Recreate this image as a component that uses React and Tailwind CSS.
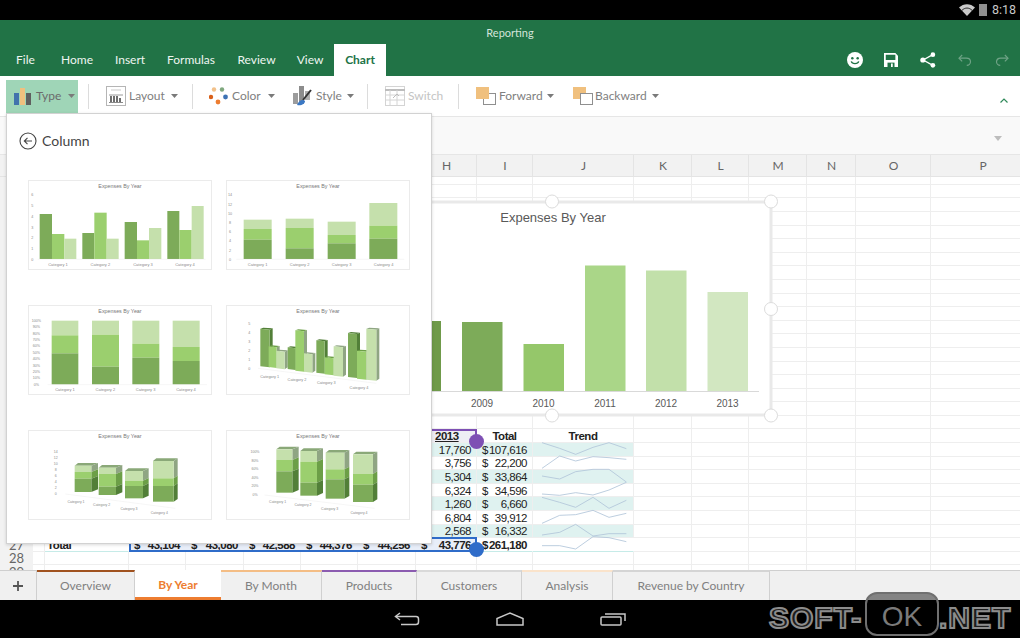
import React from "react";

const C = { d: "#7dab59", m: "#9bcf6e", l: "#c5e0ac" };
const CD = { d: "#527f38", m: "#6c9f47", l: "#8fa583" };

const colWidths = [33, 12, 84, 57, 58, 57, 57, 58, 61, 56, 101, 58, 57, 58, 49, 75, 104];
const colLetters = ["", "A", "B", "C", "D", "E", "F", "G", "H", "I", "J", "K", "L", "M", "N", "O", "P"];

const Dollar = ({ v, bold }) => (
  <div className={`flex justify-between w-full pl-[5px] pr-[5px] ${bold ? "font-bold" : ""}`}>
    <span>$</span>
    <span>{v}</span>
  </div>
);

const dataRows = {
  20: ["17,760", "107,616"],
  21: ["3,756", "22,200"],
  22: ["5,304", "33,864"],
  23: ["6,324", "34,596"],
  24: ["1,260", "6,660"],
  25: ["6,804", "39,912"],
  26: ["2,568", "16,332"],
};

function cellContent(r, c) {
  if (r === 19) {
    if (c === 8) return <div className="w-full pl-[19px] font-bold underline">2013</div>;
    if (c === 9) return <div className="w-full text-center font-bold">Total</div>;
    if (c === 10) return <div className="w-full text-center font-bold">Trend</div>;
  }
  if (dataRows[r]) {
    if (c === 8) return <div className="w-full text-right pr-[5px]">{dataRows[r][0]}</div>;
    if (c === 9) return <Dollar v={dataRows[r][1]} />;
  }
  if (r === 27) {
    if (c === 2) return <div className="pl-[2px] font-bold">Total</div>;
    if (c >= 3 && c <= 8)
      return <Dollar bold v={["43,104", "43,080", "42,588", "44,376", "44,256", "43,776"][c - 3]} />;
    if (c === 9) return <Dollar bold v="261,180" />;
  }
  return null;
}

function cellBg(r, c) {
  if ((r === 20 || r === 22 || r === 24 || r === 26) && (c === 8 || c === 9 || c === 10)) return "bg-[#dff2f0]";
  if (r === 19 && c === 8) return "bg-[#eeeef4]";
  if (r === 27 && c >= 3 && c <= 8) return "bg-[#e8eef9]";
  return "bg-white";
}

function Sheet() {
  const rows = Array.from({ length: 30 }, (_, i) => i);
  return (
    <div className="relative h-[415px] overflow-hidden bg-white">
      <div className="grid w-[1035px] grid-cols-[33px_12px_84px_57px_58px_57px_57px_58px_61px_56px_101px_58px_57px_58px_49px_75px_104px] grid-rows-[22px_7.8px_repeat(29,13.6px)] font-['Liberation_Sans'] text-[11.5px] tracking-[-0.5px] text-[#222]">
        {colWidths.map((_, c) => (
          <div key={c} className="flex items-center justify-center pl-[1px] bg-[#f2f2f2] border-r border-b border-[#e4e4e4] font-['Lato'] tracking-normal text-[12px] text-[#666]">
            {colLetters[c]}
          </div>
        ))}
        {rows.map((r) =>
          colWidths.map((_, c) =>
            c === 0 ? (
              <div key={`${r}-${c}`} className="flex items-center justify-center bg-[#f2f2f2] font-['Lato'] tracking-normal text-[13px] leading-[13px] text-[#666]">
                {r >= 27 ? r : ""}
              </div>
            ) : (
              <div
                key={`${r}-${c}`}
                className={`flex items-center pt-[1px] leading-[12px] whitespace-nowrap border-r border-b ${cellBg(r, c)} ${
                  r === 27 && c <= 10 && c >= 2 ? "border-b-[#c6ebe8] border-r-transparent" : "border-[#eeeeee]"
                }`}
              >
                {cellContent(r, c)}
              </div>
            )
          )
        )}
      </div>

      {/* sparkline overlay */}
      <svg className="absolute left-[533px] top-[285px]" width="102" height="113" viewBox="325 60 306 339" fill="none" stroke="#b3c6da" strokeWidth="2.6">
        <polyline points="352,68 405,85 453,103 505,82 553,68 605,86" />
        <polyline points="352,145 405,108 453,123 505,110 553,113 605,118" />
        <polyline points="352,168 405,177 453,155 505,148 553,148 605,186" />
        <polyline points="352,222 405,226 453,218 505,225 553,210 605,187" />
        <polyline points="352,232 405,247 453,262 505,232 553,265 605,241" />
        <polyline points="352,310 405,286 453,284 505,271 553,292 605,280" />
        <polyline points="352,345 405,337 453,313 505,348 553,341 605,341" />
        <polyline points="352,377 405,377 453,387 505,350 553,353 605,365" />
      </svg>

      {/* selection outlines */}
      <div className="absolute left-[416px] top-[274px] w-[61px] h-[15px] border-t-2 border-r-2 border-[#7e50b4]" />
      <div className="absolute left-[129px] top-[382px] w-[348px] h-[15px] border-2 border-[#2f6cc9]" />
      <div className="absolute left-[469px] top-[279px] w-[15px] h-[15px] rounded-full bg-[#7e50b4]" />
      <div className="absolute left-[469px] top-[387px] w-[15px] h-[15px] rounded-full bg-[#2f6cc9]" />

      <MainChart />
    </div>
  );
}

function MainChart() {
  const bars = [
    { x: 425, w: 16, t: 321, f: "#6f9a4a" },
    { x: 462, w: 40.5, t: 322, f: "#7dab59", y: "2009" },
    { x: 523.5, w: 40.5, t: 344, f: "#95c76a", y: "2010" },
    { x: 585, w: 40.5, t: 265.5, f: "#aad688", y: "2011" },
    { x: 646, w: 40.5, t: 270.5, f: "#c2e0aa", y: "2012" },
    { x: 707.5, w: 40.5, t: 292, f: "#d2e7c1", y: "2013" },
  ];
  return (
    <div className="absolute left-[420px] top-[45px] w-[360px] h-[218px]">
      <svg width="360" height="224" viewBox="420 200 360 224" className="overflow-visible">
        <rect x="421" y="202" width="350" height="213" fill="#fff" stroke="#e9e9e9" strokeWidth="3" />
        <text x="553" y="222" textAnchor="middle" fontFamily="Liberation Sans" fontSize="13" fill="#595959">Expenses By Year</text>
        {bars.map((b) => (
          <rect key={b.x} x={b.x} y={b.t} width={b.w} height={391.3 - b.t} fill={b.f} />
        ))}
        <line x1="425" x2="759" y1="391.5" y2="391.5" stroke="#d9d9d9" />
        {bars.filter((b) => b.y).map((b) => (
          <text key={b.y} x={b.x + 20} y="407" textAnchor="middle" fontFamily="Liberation Sans" fontSize="10" fill="#595959">{b.y}</text>
        ))}
        {[[552, 201.5], [771, 201.5], [771, 309], [552, 415.5], [771, 415.5]].map(([x, y]) => (
          <circle key={`${x}${y}`} cx={x} cy={y} r="6.5" fill="#fff" stroke="#dcdcdc" />
        ))}
      </svg>
    </div>
  );
}

const T = ({ x, y, a = "middle", s = 12, children }) => (
  <text x={x} y={y} textAnchor={a} fontSize={s} fill="#8a8a8a" fontFamily="Liberation Sans">{children}</text>
);

function Thumb({ ox, oy, children, title = ox + 276 }) {
  return (
    <div className="h-[90px] ring-1 ring-inset ring-[#ebebeb] bg-white">
      <svg className="block w-full h-full" viewBox={`${ox} ${oy} 552 270`}>
        <text x={title} y={oy + 25} textAnchor="middle" fontSize="16" fill="#777" fontFamily="Liberation Sans">Expenses By Year</text>
        {children}
      </svg>
    </div>
  );
}

const R = ({ x1, x2, t, b, f }) => <rect x={x1} y={t} width={x2 - x1} height={b - t} fill={f} />;

function Thumb1() {
  const bars = [[88,125,130,"d"],[125,162,190,"m"],[162,198,204,"l"],[216,252,187,"d"],[252,289,126,"m"],[289,325,204,"l"],[343,380,154,"d"],[380,416,209,"m"],[416,453,172,"l"],[471,507,121,"d"],[507,544,178,"m"],[544,580,106,"l"]];
  return (
    <Thumb ox={53} oy={28}>
      {bars.map(([a, b, t, k]) => <R key={a} x1={a} x2={b} t={t} b={265} f={C[k]} />)}
      <line x1="82" x2="586" y1="266" y2="266" stroke="#e5e5e5" />
      {[6,5,4,3,2,1,0].map((v, i) => <T key={v} x={66} y={77 + i * 32.2} s={11}>{v}</T>)}
      {[143,270,398,524].map((x, i) => <T key={x} x={x} y={285}>{`Category ${i + 1}`}</T>)}
    </Thumb>
  );
}

function Stack({ bars, base }) {
  return bars.map(([a, b, d, m, l]) => (
    <g key={a}>
      <R x1={a} x2={b} t={l} b={m} f={C.l} />
      <R x1={a} x2={b} t={m} b={d} f={C.m} />
      <R x1={a} x2={b} t={d} b={base} f={C.d} />
    </g>
  ));
}

function Thumb2() {
  return (
    <Thumb ox={649} oy={28}>
      <Stack base={265} bars={[[702,786,207,175,147],[828,912,233,172,144],[954,1038,218,193,153],[1079,1163,204,165,97]]} />
      <line x1="680" x2="1184" y1="266" y2="266" stroke="#e5e5e5" />
      {[14,12,10,8,6,4,2,0].map((v, i) => <T key={v} x={661} y={77 + i * 27.6} s={11}>{v}</T>)}
      {[744,870,996,1122].map((x, i) => <T key={x} x={x} y={285}>{`Category ${i + 1}`}</T>)}
    </Thumb>
  );
}

function Thumb3() {
  return (
    <Thumb ox={53} oy={403}>
      <Stack base={641} bars={[[124,204,548,494,450],[245,326,588,492,450],[366,447,561,519,450],[487,568,571,529,450]]} />
      <line x1="112" x2="590" y1="642" y2="642" stroke="#e5e5e5" />
      {[100,90,80,70,60,50,40,30,20,10,0].map((v, i) => <T key={v} x={78} y={454 + i * 19.1} s={11}>{`${v}%`}</T>)}
      {[164,285,406,527].map((x, i) => <T key={x} x={x} y={660}>{`Category ${i + 1}`}</T>)}
    </Thumb>
  );
}

function Bar3D({ a, b, t, bt, k, dx = 9, dy = 6 }) {
  return (
    <g>
      <polygon points={`${b},${t + 3} ${b + dx},${t - 1} ${b + dx},${bt - dy} ${b},${bt}`} fill={k === "d" ? CD.d : CD.l} />
      <polygon points={`${a},${t} ${a + dx},${t - 3} ${b + dx},${t - 1} ${b},${t + 3}`} fill={CD[k]} />
      <polygon points={`${a},${t} ${b},${t + 3} ${b},${bt} ${a},${bt - 3}`} fill={C[k]} />
    </g>
  );
}

function Thumb4() {
  const bars = [[752,780,474,590,"d"],[777,801,527,592,"m"],[800,825,540,596,"l"],[834,857,530,598,"d"],[857,883,479,603,"m"],[883,908,548,606,"l"],[920,945,509,609,"d"],[945,972,560,614,"m"],[972,1000,527,618,"l"],[1015,1042,487,622,"d"],[1042,1070,540,627,"m"],[1070,1100,474,630,"l"]];
  return (
    <Thumb ox={649} oy={403}>
      <line x1="745" x2="1100" y1="593" y2="638" stroke="#e5e5e5" />
      {bars.map(([a, b, t, bt, k]) => <Bar3D key={a} a={a} b={b} t={t} bt={bt} k={k} />)}
      {[5,4,3,2,1,0].map((v, i) => <T key={v} x={719} y={463 + i * 27} s={11}>{v}</T>)}
      {[[780,621],[862,631],[950,641],[1048,654]].map(([x, y], i) => <T key={x} x={x} y={y} s={11.5}>{`Category ${i + 1}`}</T>)}
    </Thumb>
  );
}

function Stack3D({ bars }) {
  return bars.map(([a, b, bt, d, m, t, dx]) => {
    const segs = [[t, m, "l"], [m, d, "m"], [d, bt, "d"]];
    return (
      <g key={a}>
        <polygon points={`${a},${t} ${a + 10},${t - 8} ${b + dx},${t - 8} ${b},${t}`} fill="#8aa878" />
        {segs.map(([s, e, k]) => (
          <g key={k}>
            <polygon points={`${b},${s} ${b + dx},${s - 8} ${b + dx},${e - 8} ${b},${e}`} fill={k === "l" ? "#8fa583" : CD[k]} />
            <rect x={a} y={s} width={b - a} height={e - s} fill={C[k]} />
          </g>
        ))}
      </g>
    );
  });
}

function Thumb5() {
  return (
    <Thumb ox={53} oy={90}>
      <line x1="165" x2="495" y1="282" y2="325" stroke="#e5e5e5" />
      <Stack3D bars={[[193,243,276,236,216,197,20],[265,317,285,260,222,203,19],[344,398,295,258,242,213,17],[428,490,305,258,235,183,12]]} />
      {[14,12,10,8,6,4,2,0].map((v, i) => <T key={v} x={136} y={158 + i * 18.2} s={10.5}>{v}</T>)}
      {[[197,308],[274,318],[356,329],[447,341]].map(([x, y], i) => <T key={x} x={x} y={y} s={10.5}>{`Category ${i + 1}`}</T>)}
    </Thumb>
  );
}

function Thumb6() {
  return (
    <Thumb ox={649} oy={90}>
      <line x1="765" x2="1095" y1="285" y2="325" stroke="#e5e5e5" />
      <Stack3D bars={[[800,848,278,214,180,148,19],[872,922,287,248,185,153,18],[948,1004,296,238,208,158,15],[1030,1090,306,254,222,163,13]]} />
      {[100,80,60,40,20,0].map((v, i) => <T key={v} x={736} y={159 + i * 25.6} s={10.5}>{`${v}%`}</T>)}
      {[[804,309],[880,318],[960,330],[1048,341]].map(([x, y], i) => <T key={x} x={x} y={y} s={10.5}>{`Category ${i + 1}`}</T>)}
    </Thumb>
  );
}

function Panel() {
  return (
    <div className="absolute left-[6px] top-[113px] w-[426px] h-[431px] bg-white border border-[#d2d2d2] shadow-[0_1px_3px_rgba(0,0,0,0.15)] px-[21px]">
      <div className="flex items-center gap-[5px] h-[53px] -ml-[9px]">
        <svg width="18" height="18" viewBox="0 0 18 18" fill="none" stroke="#444" strokeWidth="1.1">
          <circle cx="9" cy="9" r="8" />
          <path d="M13 9H5.500M8.500 5.800 5.300 9l3.200 3.200" />
        </svg>
        <span className="text-[14px] text-[#444]">Column</span>
      </div>
      <div className="grid grid-cols-[184px_184px] gap-x-[14px] gap-y-[35px] mt-[13px]">
        <Thumb1 /><Thumb2 /><Thumb3 /><Thumb4 /><Thumb5 /><Thumb6 />
      </div>
    </div>
  );
}

const Caret = ({ className = "" }) => (
  <svg width="7" height="4" viewBox="0 0 7 4" className={className}><path d="M0 0h7L3.500 4z" fill="#7a7a7a" /></svg>
);
const Sep = ({ className = "" }) => <div className={`w-px h-[25px] bg-[#dcdcdc] ${className}`} />;

const TypeIcon = () => (
  <svg width="18" height="18" viewBox="0 0 18 18">
    <rect x="0" y="6" width="5" height="12" fill="#4273ad" />
    <rect x="6" y="1" width="5" height="17" fill="#f0c07e" />
    <rect x="12" y="6" width="5" height="12" fill="#5f5f5f" />
  </svg>
);
const LayoutIcon = () => (
  <svg width="20" height="20" viewBox="0 0 20 20">
    <rect x="0.5" y="0.5" width="19" height="19" fill="#fff" stroke="#b5b5b5" />
    <path d="M5 4h10" stroke="#c9c9c9" />
    <path d="M3 9h14" stroke="#9a9a9a" />
    <path d="M4 10h2v6H4zM7 10h2v6H7zM10 10h2v6h-2zM13 12h2v4h-2z" fill="#6e6e6e" />
    <path d="M3 16.500h14" stroke="#8a8a8a" />
  </svg>
);
const ColorIcon = () => (
  <svg width="20" height="18" viewBox="0 0 20 18">
    <circle cx="5" cy="2.500" r="2.200" fill="#f2c18a" />
    <circle cx="13" cy="2.500" r="2.200" fill="#7fa87e" />
    <circle cx="2" cy="10" r="2.200" fill="#d9601a" />
    <circle cx="16.500" cy="10" r="2.400" fill="#3d72b4" />
    <circle cx="9" cy="15" r="2.400" fill="#ed7d31" />
  </svg>
);
const StyleIcon = () => (
  <svg width="20" height="20" viewBox="0 0 20 20">
    <rect x="0" y="7" width="5" height="11" fill="#9c9c9c" />
    <rect x="6" y="0" width="5" height="18" fill="#8c8c8c" />
    <rect x="12" y="5" width="5" height="9" fill="#b0b0b0" />
    <path d="M18 4 10 14" stroke="#333" strokeWidth="2" />
    <path d="M4 19c2-5 6-6 8-4 0 3-4 5-8 4z" fill="#3b78c4" />
  </svg>
);
const SwitchIcon = () => (
  <svg width="20" height="20" viewBox="0 0 20 20" fill="none" stroke="#d4d4d4">
    <rect x="0.500" y="0.500" width="19" height="19" fill="#fff" />
    <path d="M0 4h20" stroke="#bdbdbd" strokeWidth="2" />
    <path d="M0 9h20M0 14h20M5 4v16M12 4v16" />
    <path d="M8 12l4-4 2 2" stroke="#bcbcbc" />
  </svg>
);
const ForwardIcon = () => (
  <svg width="20" height="18" viewBox="0 0 20 18">
    <rect x="7.500" y="6.500" width="12" height="11" fill="#fff" stroke="#8f8f8f" />
    <rect x="0" y="0" width="13" height="12" fill="#f0c07e" />
  </svg>
);
const BackwardIcon = () => (
  <svg width="20" height="18" viewBox="0 0 20 18">
    <rect x="0" y="0" width="13" height="12" fill="#f0c07e" />
    <rect x="7.500" y="6.500" width="12" height="11" fill="#fff" stroke="#8f8f8f" />
  </svg>
);

function ToolBtn({ icon, label, labelW, faded, caret = true, ml, textMl = "ml-[3px]", caretMl = "ml-[8px]" }) {
  return (
    <div className={`flex items-center ${ml}`}>
      {icon}
      <span className={`${textMl} ${labelW} whitespace-nowrap text-[12px] ${faded ? "text-[#c4c4c4]" : "text-[#808080]"}`}>{label}</span>
      {caret && <Caret className={caretMl} />}
    </div>
  );
}

function Toolbar() {
  return (
    <div className="relative flex items-center h-[40px] bg-white">
      <div className="flex items-center h-[33px] w-[72px] ml-[6px] pl-[8px] bg-[#9fd5b7]">
        <TypeIcon />
        <span className="ml-[4px] w-[24px] text-[12px] text-[#6b6b6b]">Type</span>
        <Caret className="ml-[8px]" />
      </div>
      <Sep className="ml-[10px]" />
      <ToolBtn ml="ml-[17px]" labelW="w-[34px]" icon={<LayoutIcon />} label="Layout" />
      <Sep className="ml-[14px]" />
      <ToolBtn ml="ml-[16px]" labelW="w-[28px]" icon={<ColorIcon />} label="Color" />
      <ToolBtn ml="ml-[18px]" labelW="w-[24px]" caretMl="ml-[7px]" icon={<StyleIcon />} label="Style" />
      <Sep className="ml-[13px]" />
      <ToolBtn ml="ml-[17px]" labelW="w-[33px]" icon={<SwitchIcon />} label="Switch" faded caret={false} />
      <Sep className="ml-[17px]" />
      <ToolBtn ml="ml-[17px]" labelW="w-[41px]" caretMl="ml-[7px]" icon={<ForwardIcon />} label="Forward" />
      <ToolBtn ml="ml-[19px]" labelW="w-[49px]" textMl="ml-[2px]" icon={<BackwardIcon />} label="Backward" />
      <svg className="absolute right-[12px] top-[22px]" width="8" height="5" viewBox="0 0 8 5" fill="none" stroke="#2f8a5a" strokeWidth="1.2"><path d="M.5 4.500 4 1l3.500 3.500" /></svg>
    </div>
  );
}

function Green() {
  const tabs = [
    ["Home", "ml-[27px] w-[32px]"],
    ["Insert", "ml-[22px] w-[30px]"],
    ["Formulas", "ml-[22px] w-[48px]"],
    ["Review", "ml-[23px] w-[37px]"],
    ["View", "ml-[22px] w-[26px]"],
  ];
  return (
    <div className="bg-[#217346] h-[56px] flex flex-col">
      <div className="h-[24px] flex items-center justify-center pt-[2px] text-[11px] text-[#d3e4da]">Reporting</div>
      <div className="flex-1 flex items-stretch pl-[16px] text-[12px] text-[#eef5f1]">
        <div className="flex items-center w-[18px]">File</div>
        {tabs.map(([t, c]) => <div key={t} className={`flex items-center justify-center whitespace-nowrap ${c}`}>{t}</div>)}
        <div className="ml-[11px] w-[52px] flex items-center justify-center bg-white text-[#217346] font-bold">Chart</div>
        <div className="ml-[461px] flex items-center">
          <svg width="16" height="16" viewBox="0 0 18 18">
            <circle cx="9" cy="9" r="9" fill="#fff" />
            <circle cx="6" cy="7" r="1.400" fill="#217346" />
            <circle cx="12" cy="7" r="1.400" fill="#217346" />
            <path d="M4.800 10.500c1 3.400 7.400 3.400 8.400 0" fill="none" stroke="#217346" strokeWidth="1.500" />
          </svg>
          <svg width="14" height="14" viewBox="0 0 16 16" className="ml-[21px]">
            <path d="M0 0h13l3 3v13H0z" fill="#fff" />
            <path d="M2 2h11v6H2z" fill="#217346" />
            <path d="M4 11h8v5H4z" fill="#217346" />
            <path d="M8 12h2v4H8z" fill="#fff" />
          </svg>
          <svg width="16" height="16" viewBox="0 0 18 18" className="ml-[22px]">
            <path d="M14.500 3 3.500 9l11 6" fill="none" stroke="#fff" strokeWidth="1.400" />
            <circle cx="14.500" cy="3" r="2.600" fill="#fff" />
            <circle cx="3.200" cy="9" r="2.900" fill="#fff" />
            <circle cx="14.500" cy="15" r="2.600" fill="#fff" />
          </svg>
          <svg width="15" height="14" viewBox="0 0 18 14" fill="none" stroke="#6fa386" strokeWidth="1.400" className="ml-[22px]">
            <path d="M5 1 1.200 4.800 5 8.600" />
            <path d="M1.500 4.800H10c3 0 5 2 5 4.400S13 13.500 10.500 13.500" />
          </svg>
          <svg width="15" height="14" viewBox="0 0 18 14" fill="none" stroke="#6fa386" strokeWidth="1.400" className="ml-[21px]">
            <path d="M13 1l3.800 3.800L13 8.600" />
            <path d="M16.500 4.800H8c-3 0-5 2-5 4.400s2 4.300 4.500 4.300" />
          </svg>
        </div>
      </div>
    </div>
  );
}

function SheetTabs() {
  const tabs = [
    ["Overview", "w-[98px]", "border-t-[#a0521f]"],
    ["By Year", "w-[86px]", ""],
    ["By Month", "w-[101px]", "border-t-[#f4bd85]"],
    ["Products", "w-[95px]", "border-t-[#8b5cb0]"],
    ["Customers", "w-[105px]", "border-t-[#d9d9d9]"],
    ["Analysis", "w-[91px]", "border-t-[#fae3cb]"],
    ["Revenue by Country", "w-[157px]", "border-t-[#d4d4d4]"],
  ];
  return (
    <div className="flex h-[30px] bg-[#f0f0f0] text-[12px]">
      <div className="flex items-center justify-center w-[37px] border-t border-[#cfcfcf] border-r">
        <svg width="12" height="12" viewBox="0 0 12 12"><path d="M6 1v10M1 6h10" stroke="#555" strokeWidth="1.800" /></svg>
      </div>
      {tabs.map(([t, w, b]) =>
        t === "By Year" ? (
          <div key={t} className={`${w} flex items-center justify-center bg-white text-[#ed7d31] font-bold border-b-[3px] border-[#ed7d31] pt-[2px]`}>{t}</div>
        ) : (
          <div key={t} className={`${w} flex items-center justify-center border-t-2 ${b} border-r border-r-[#d0d0d0] text-[#808080]`}>{t}</div>
        )
      )}
      <div className="flex-1 border-t border-[#cfcfcf]" />
    </div>
  );
}

function NavBar() {
  return (
    <div className="relative flex items-center justify-center gap-[76px] h-[38px] bg-black">
      <svg width="26" height="14" viewBox="0 0 26 14" fill="none" stroke="#c8c8c8" strokeWidth="1.500">
        <path d="M6 1 1.500 4.500 6 8" />
        <path d="M2 4.500h20a2.500 2.500 0 0 1 2.500 2.500v3a2.500 2.500 0 0 1-2.500 2.500H7" />
      </svg>
      <svg width="28" height="14" viewBox="0 0 28 14" fill="none" stroke="#c8c8c8" strokeWidth="1.500">
        <path d="M1 13V6.500L14 1l13 5.500V13z" />
      </svg>
      <svg width="26" height="14" viewBox="0 0 26 14" fill="none" stroke="#c8c8c8" strokeWidth="1.500">
        <rect x="1" y="5" width="20" height="8" rx="1" />
        <path d="M5 2h20v7" />
      </svg>
    </div>
  );
}

function Watermark() {
  const outline = "font-['Liberation_Sans'] font-bold text-[#1c1c1c] text-[30px] tracking-[1px] [-webkit-text-stroke:2px_#8c8c8c]";
  return (
    <div className="absolute left-[769px] top-[592px] flex items-center h-[44px]">
      <span className={`${outline} w-[96px] pt-[6px]`}>SOFT-</span>
      <div className="flex items-center justify-center w-[74px] h-[44px] rounded-[12px] border-2 border-[#707070] bg-black/45 font-['Liberation_Sans'] text-[28px] text-[#7a7a7a] pt-[6px]">OK</div>
      <span className={`${outline} pt-[6px]`}>.NET</span>
    </div>
  );
}

export default function App() {
  return (
    <div className="relative w-[1020px] h-[638px] overflow-hidden bg-white font-['Lato',sans-serif]">
      <div className="flex items-center justify-end h-[20px] bg-black pr-[4px] gap-[4px]">
        <svg width="16" height="12" viewBox="0 0 16 12">
          <path d="M0 3.500C4.500-1 11.500-1 16 3.500L8 12z" fill="#c9c9c9" />
          <path d="M3 6.300c3-3 7-3 10 0" fill="none" stroke="#000" strokeWidth="0.800" />
        </svg>
        <div className="w-[8px] h-[12px] bg-[#8f8f8f]" />
        <span className="ml-[1px] text-[12.5px] text-[#c9c9c9] font-['Roboto']">8:18</span>
      </div>
      <Green />
      <Toolbar />
      <div className="relative h-[39px] bg-[#f9f9f9] border-y border-[#e6e6e6]">
        <svg className="absolute right-[18px] top-[19px]" width="8" height="5" viewBox="0 0 8 5"><path d="M0 0h8L4 5z" fill="#bdbdbd" /></svg>
      </div>
      <Sheet />
      <SheetTabs />
      <NavBar />
      <Panel />
      <Watermark />
    </div>
  );
}
